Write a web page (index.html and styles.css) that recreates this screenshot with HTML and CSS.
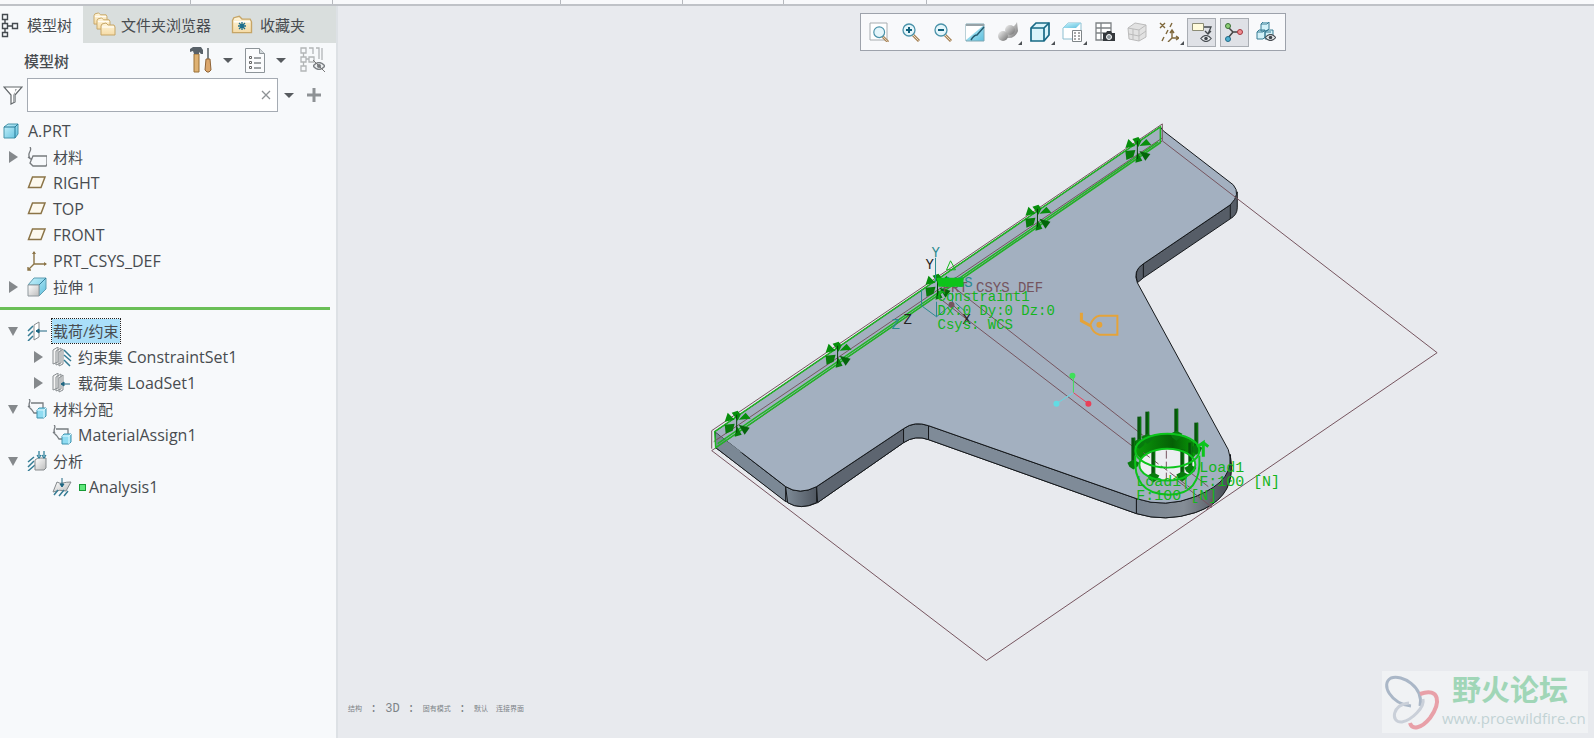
FILE: index.html
```html
<!DOCTYPE html>
<html lang="zh-CN">
<head>
  <meta charset="UTF-8">
  <title>A.PRT</title>
  <link rel="stylesheet" href="styles.css">
</head>
<body>
  <svg class="defs" aria-hidden="true">
    <defs>
      <linearGradient id="blue" x1="0" y1="0" x2="1" y2="1">
        <stop offset="0" stop-color="#c9f2fb"/><stop offset="1" stop-color="#5fc0de"/>
      </linearGradient>
      <linearGradient id="grey" x1="0" y1="0" x2="1" y2="1">
        <stop offset="0" stop-color="#ffffff"/><stop offset="1" stop-color="#bcbcbc"/>
      </linearGradient>
      <linearGradient id="ball" x1="0" y1="0" x2="1" y2="1">
        <stop offset="0" stop-color="#f4f4f4"/><stop offset="1" stop-color="#6f6f6f"/>
      </linearGradient>
      <linearGradient id="cream" x1="0" y1="0" x2="0" y2="1">
        <stop offset="0" stop-color="#fff6dc"/><stop offset="1" stop-color="#f5dba6"/>
      </linearGradient>
      <linearGradient id="wall" x1="0" y1="0" x2="1" y2="0">
        <stop offset="0" stop-color="#7e8b97"/><stop offset="1" stop-color="#505761"/>
      </linearGradient>
      <linearGradient id="tip" x1="0" y1="0" x2="1" y2="0">
        <stop offset="0" stop-color="#798592"/><stop offset="0.5" stop-color="#858d96"/><stop offset="1" stop-color="#444952"/>
      </linearGradient>
      <linearGradient id="bore" x1="0" y1="0" x2="1" y2="0">
        <stop offset="0" stop-color="#0a9a0a"/><stop offset="0.6" stop-color="#056005"/><stop offset="1" stop-color="#08a008"/>
      </linearGradient>
      <symbol id="plane" viewBox="0 0 20 20"><path d="M1.5 14.500 5.500 4H18l-4 10.500z" fill="#fdf9ee" stroke="#8b7447" stroke-width="1.500"/></symbol>
      <symbol id="folder" viewBox="0 0 16 14"><path d="M1 13V4l1-2 4-1 2 2h6l1 2v8z" fill="url(#cream)" stroke="#c6a566"/><path d="M2 5h12" stroke="#fff"/></symbol>
      <symbol id="assign" viewBox="0 0 20 20">
        <path d="M2 0c3 2-2 5 1 8M1 7l4 4M4 4h12v5M5 11l2 3h4" fill="none" stroke="#777c80" stroke-width="1.300"/>
        <path d="M10 11l2-2h7v8l-2 2h-7z" fill="#8fdcf2" stroke="#3c91ad"/><path d="M10 11h7l2-2M17 11v8" fill="none" stroke="#dff8ff"/>
      </symbol>
      <symbol id="loupe" viewBox="0 0 20 20">
        <path d="M12 13l6 6" stroke="#a98559" stroke-width="3"/><path d="M12 13l5.500 5.500" stroke="#e9dcc8" stroke-width="1"/>
        <circle cx="8" cy="8" r="6" fill="#e5f6fb" stroke="#4b93aa" stroke-width="1.300"/>
      </symbol>
      <symbol id="eye" viewBox="0 0 12 8"><path d="M0 4q6-7 12 0q-6 7-12 0z" fill="#e7eaec" stroke="#484d52" stroke-width="1.300"/><circle cx="6" cy="4" r="2" fill="#3f444a"/></symbol>
      <g id="pin">
        <path d="M-12-2l3-9 7 7zM-5-11l6-2 3 4-3 6zM2-4l7-7 5 6z" fill="#078f0c"/>
        <path d="M-12 1l10-1-2 7-7 3z" fill="#087c0b"/><path d="M2 1l11 3-5 7z" fill="#04650a"/><path d="M0 2l5 9-7 2z" fill="#067d0b"/>
        <path d="M0-9V9" stroke="#063f08"/>
      </g>
      <g id="force">
        <path d="M0-18V9" stroke="#07540b" stroke-width="4"/><path d="M1-18V9" stroke="#0a7d10"/>
        <path d="M-6 7-4 11 0 14 4 11 6 7 0 4z" fill="#087a0e"/>
      </g>
    </defs>
  </svg>

  <div class="ribbon"><i></i><i></i><i></i><i></i><i></i><i></i></div>

  <div class="window">
    <aside class="sidebar">
      <nav class="tabs">
        <button class="tab tab-model active">
          <svg width="20" height="26" viewBox="0 0 20 26"><path d="M2.500 2.500h5v5h-5zM2.500 11.500h5v5h-5zM2.500 20.500h5v4h-5zM12.500 11.500h5v5h-5zM5 8v3M5 17v3M8 14h4" fill="none" stroke="#444a4f" stroke-width="1.400"/></svg>
          模型树
        </button>
        <button class="tab tab-folders">
          <svg width="24" height="26" viewBox="0 0 24 26"><use href="#folder" width="15" height="13"/><use href="#folder" x="3" y="5" width="15" height="13"/><use href="#folder" x="7" y="10" width="16" height="14"/></svg>
          文件夹浏览器
        </button>
        <button class="tab tab-favorites">
          <svg width="22" height="20" viewBox="0 0 22 20"><use href="#folder" width="22" height="19"/><path d="M11 7v8M7 11h8M8 8l6 6M14 8l-6 6" stroke="#1e6f8d" stroke-width="1.300"/></svg>
          收藏夹
        </button>
      </nav>

      <div class="heading">
        <h1>模型树</h1>
        <button class="icon-button" aria-label="设置">
          <svg width="22" height="26" viewBox="0 0 22 26"><path d="M4 7h5v18H4z" fill="#dfb273" stroke="#9a7137"/><path d="M0 5V2l3-2h8l2 3v4h-2L9 5v2H4L3 4z" fill="#596269"/><path d="M17 1h2v11h-2z" fill="#7d8589"/><path d="M16 12h4l1 11-2 2h-2l-2-2z" fill="#dba76d" stroke="#8f6437"/></svg>
          <span class="caret"></span>
        </button>
        <button class="icon-button" aria-label="显示">
          <svg width="20" height="25" viewBox="0 0 20 25"><path d="M.5.500h14l5 5v19H.5z" fill="#fbfcfd" stroke="#8d9499"/><path d="M14.500.5v5h5" fill="#d3d8db" stroke="#8d9499"/><path d="M9 10h7M9 15h7M9 20h7" stroke="#43484c"/><path d="M4.500 8.500h2v2h-2zM4.500 13.500h2v2h-2zM4.500 18.500h2v2h-2z" fill="#fff" stroke="#666"/></svg>
          <span class="caret"></span>
        </button>
        <button class="icon-button last" aria-label="列">
          <svg width="26" height="26" viewBox="0 0 26 26"><path d="M1 1h5v5H1zM1 10h5v5H1zM1 19h5v5H1zM9 10h5v5H9zM3.500 6v4M3.500 15v4M6 12h3M9 1h4v6M16 1h3v11M22 1v12" fill="none" stroke="#b2b5b7" stroke-width="1.300"/><use href="#eye" x="13" y="15" width="12" height="8" opacity=".7"/><path d="M13 13l12 12" stroke="#777"/></svg>
        </button>
      </div>

      <div class="search">
        <svg width="20" height="20" viewBox="0 0 20 20"><path d="M1 2h18l-7 8v7l-4 2v-9z" fill="#fff" stroke="#63686b" stroke-width="1.200"/><path d="M12 4v13h-2v-7l4-6z" fill="#a8acae"/></svg>
        <div class="search-box">
          <input type="text" aria-label="搜索">
          <button aria-label="清除"><svg width="10" height="10" viewBox="0 0 10 10"><path d="M1 1l8 8M9 1 1 9" stroke="#8e9295" stroke-width="1.300"/></svg></button>
        </div>
        <button class="more" aria-label="历史"><span class="caret"></span></button>
        <button class="add" aria-label="添加"><svg width="14" height="14" viewBox="0 0 14 14"><path d="M7 0v14M0 7h14" stroke="#8e9295" stroke-width="3"/></svg></button>
      </div>

      <ul class="tree">
        <li class="row root"><svg viewBox="0 0 20 20"><path d="M4 6l4-3h10v10l-3 4H4z" fill="url(#blue)" stroke="#4794aa"/><path d="M4 6h11l3-3M15 6v11" fill="none" stroke="#277b98"/></svg><span class="name">A.PRT</span></li>
        <li class="row"><button class="twist closed" aria-label="展开"></button><svg viewBox="0 0 20 20"><path d="M3 0c3 4-4 6 0 11M1 10l4 3M6 9h14v8l-1 2H6l-3-3z" fill="none" stroke="#777b7e" stroke-width="1.300"/></svg>材料</li>
        <li class="row leaf"><svg><use href="#plane"/></svg><span class="name">RIGHT</span></li>
        <li class="row leaf"><svg><use href="#plane"/></svg><span class="name">TOP</span></li>
        <li class="row leaf"><svg><use href="#plane"/></svg><span class="name">FRONT</span></li>
        <li class="row leaf"><svg viewBox="0 0 20 20"><path d="M7 1v12h12M7 13l-6 6M1 16v3h3" fill="none" stroke="#8b7447" stroke-width="1.400"/><path d="M5 3l2-3 2 3zM17 11l3 2-3 2z" fill="#8b7447"/></svg><span class="name">PRT_CSYS_DEF</span></li>
        <li class="row"><button class="twist closed" aria-label="展开"></button><svg viewBox="0 0 20 20"><path d="M1 8l6-7h12v11l-7 7V8z" fill="url(#blue)" stroke="#5f9db1"/><path d="M1 8h11v11H1z" fill="url(#grey)" stroke="#8f989d"/><path d="M12 8l7-7" stroke="#317f9c"/></svg>拉伸 1</li>
      </ul>
      <hr class="insert-here">
      <ul class="tree">
        <li class="row"><button class="twist" aria-label="折叠"></button><svg viewBox="0 0 20 20"><path d="M1 10l5-5M1 15l5-5M1 20l5-5" stroke="#357c94" stroke-width="1.500"/><path d="M7 4l5-3v15l-5 3z" fill="#fff" stroke="#858a8d"/><path d="M9 10h11M9 10l3-2v4z" fill="#1e6682" stroke="#1e6682"/></svg><span class="selected">载荷/约束</span></li>
        <li class="row child"><button class="twist closed" aria-label="展开"></button><svg viewBox="0 0 20 20"><path d="M1 3l5-3v15l-5 2zM4 4l5-3v15l-5 2zM7 5l4-3v15l-4 2z" fill="#f4f4f4" stroke="#898e91"/><path d="M12 3l7 7M12 8l7 6M12 13l6 6" stroke="#357c94" stroke-width="1.500"/></svg>约束集&nbsp;<span class="name">ConstraintSet1</span></li>
        <li class="row child"><button class="twist closed" aria-label="展开"></button><svg viewBox="0 0 20 20"><path d="M1 3l5-3v15l-5 2zM4 4l5-3v15l-5 2zM7 5l4-3v15l-4 2z" fill="#f4f4f4" stroke="#898e91"/><path d="M9 11h9M9 11l3-2v4z" fill="#1e6682" stroke="#1e6682"/></svg>载荷集&nbsp;<span class="name">LoadSet1</span></li>
        <li class="row"><button class="twist" aria-label="折叠"></button><svg><use href="#assign"/></svg>材料分配</li>
        <li class="row child leaf"><svg><use href="#assign"/></svg><span class="name">MaterialAssign1</span></li>
        <li class="row"><button class="twist" aria-label="折叠"></button><svg viewBox="0 0 20 20"><path d="M1 11l6-5M1 16l6-6M1 20l7-6" stroke="#357c94" stroke-width="1.500"/><path d="M8 9l3-2h8v10l-2 2H8z" fill="url(#grey)" stroke="#85898c"/><path d="M12 0v5M17 0v5M10 4l2 3 2-3M15 4l2 3 2-3" fill="none" stroke="#247995" stroke-width="1.200"/></svg>分析</li>
        <li class="row child leaf"><svg viewBox="0 0 20 20"><path d="M5 5q3 2 6 1t8-1l-5 9q-6-2-13 1z" fill="url(#grey)" stroke="#83898c"/><path d="M2 18l4-5M7 19l5-6M12 19l4-5" stroke="#357c94" stroke-width="1.500"/><path d="M10 1v8M8 7l2 3 2-3z" fill="#1e6682" stroke="#1e6682"/></svg><span class="status"></span><span class="name">Analysis1</span></li>
      </ul>
    </aside>

    <main class="viewport">
      <svg class="scene" viewBox="337 6 1257 732">
        <!-- side walls -->
        <g stroke="#15181b">
          <path d="M715 433 785 487Q799 496 816 487L903 429Q914 421 928 426L1136 499Q1165 509 1195 497 1231 482 1230 455L1231 465Q1232 500 1195 513 1165 523 1136 514L928 440Q915 435 903 443L817 503Q800 511 787 503L715 448z" fill="url(#wall)"/>
          <path d="M1136 499Q1165 509 1195 497 1231 482 1230 455L1231 468Q1232 500 1195 513 1165 523 1136 514z" fill="url(#tip)"/>
          <path d="M715 433 785 487v15L715 448z" fill="#7b8895"/>
          <path d="M785 487Q799 496 816 487v16Q800 511 787 503z" fill="url(#wall)"/>
          <path d="M816 487 903 429v14L817 503z" fill="#5d6570"/>
          <path d="M903 429Q914 421 928 426v14Q915 435 903 443z" fill="#717d89"/>
          <path d="M928 426 1136 499v15L928 440z" fill="#7f8b98"/>
          <path d="M1137 283Q1133 268 1143 264L1230 205 1237 192v16Q1237 215 1230 219L1143 278z" fill="#565d67"/>
        </g>
        <!-- top face -->
        <path d="M715 433 785 487Q799 496 816 487L903 429Q914 421 928 426L1136 499Q1165 509 1195 497 1238 480 1228 450L1137 283Q1132 271 1143 264L1230 205Q1241 194 1233 185L1163 131 1160 127 714 432z" fill="#a3b0c0" stroke="#15181b"/>
        <path d="M715 433 742 453 715 448z" fill="#7b8895"/>
        <path d="M1143 264v14M1230 205v14" fill="none" stroke="#15181b"/>

        <!-- datum outlines -->
        <g fill="none" stroke="#75545e">
          <path d="M711 451 986 661 1437 353 1162 141z"/>
          <path d="M711 449v-18L1162 124v17M713 442 1162 138"/>
          <path d="M945 281 1208 487M937 297 1211 507M1206 510l6-5M1211 499v9"/>
        </g>

        <!-- constrained face -->
        <path d="M714 432 1160 127v16L715 448zM717 444 1158 142" fill="none" stroke="#1fb524" stroke-width="1.500"/>
        <use href="#pin" x="736" y="424"/><use href="#pin" x="837" y="355"/><use href="#pin" x="937" y="287"/><use href="#pin" x="1037" y="218"/><use href="#pin" x="1137" y="150"/>

        <!-- coordinate system -->
        <path d="M935 258v24M921 290v16l15 11 16-13v-11M936 302v15M955 303l10 9" fill="none" stroke="#2a8a90"/>
        <path d="M951 304 968 320" stroke="#75545e"/>
        <circle cx="951" cy="305" r="3" fill="#75545e"/>
        <g class="cad">
          <text x="942" y="292" class="datum">PRT_CSYS_DEF</text>
          <text x="947" y="287" class="teal">WCS</text>
          <text x="931" y="257" class="teal">Y</text>
          <text x="891" y="329" class="teal">Z</text>
          <text x="925" y="269" class="black">Y</text>
          <text x="903" y="324" class="black">Z</text>
          <text x="962" y="324" class="black">X</text>
          <text x="937" y="301">Constraint1</text>
          <text x="937" y="315">Dx:0 Dy:0 Dz:0</text>
          <text x="937" y="329">Csys: WCS</text>
        </g>
        <path d="M936 278 963 278v9h-25z" fill="#0dc31a"/>
        <path d="M946 270l4-9 5 9z" fill="none" stroke="#16b71b"/>

        <!-- material tag -->
        <path d="M1081 313v8l9 5" fill="none" stroke="#e5a339" stroke-width="3"/>
        <path d="M1090 325q3-8 9-9h18v19h-18q-7-2-9-10z" fill="none" stroke="#e5a339" stroke-width="2"/>
        <circle cx="1099" cy="325" r="3" fill="#e5a339"/>

        <!-- spin centre -->
        <path d="M1073 393v-16" stroke="#3fe05a"/><circle cx="1072" cy="376" r="3" fill="#3fe05a"/>
        <path d="M1073 393l-17 11" stroke="#62dbe3"/><circle cx="1056" cy="404" r="3" fill="#62dbe3"/>
        <path d="M1073 393l15 11" stroke="#e94058"/><circle cx="1088" cy="404" r="3" fill="#e94058"/>

        <!-- loaded hole -->
        <ellipse cx="1166" cy="450" rx="31" ry="16" fill="url(#bore)"/>
        <ellipse cx="1167" cy="465" rx="28" ry="16" fill="#eceef1"/>
        <path d="M1143 453l48 36M1166 451v30" fill="none" stroke="#75545e" stroke-dasharray="8 3"/>
        <use href="#force" x="1139" y="435"/><use href="#force" x="1147" y="430"/><use href="#force" x="1176" y="427"/><use href="#force" x="1196" y="441"/>
        <use href="#force" x="1133" y="456"/><use href="#force" x="1153" y="469"/><use href="#force" x="1190" y="461"/><use href="#force" x="1182" y="468"/>
        <g fill="none" stroke="#0cc51b" stroke-width="2">
          <ellipse cx="1167" cy="451" rx="32" ry="17"/>
          <path d="M1135 456Q1132 494 1167 495T1199 456"/>
          <ellipse cx="1167" cy="465" rx="28" ry="16"/>
          <path d="M1203 457v-14l-6 4M1203 443l5 4" stroke-width="3"/>
        </g>
        <g class="cad load">
          <text x="1199" y="472">Load1</text>
          <text x="1136" y="486">Load1| F:100 [N]</text>
          <text x="1136" y="500">F:100 [N]</text>
        </g>
      </svg>

      <div class="toolbar">
        <button aria-label="重新调整"><svg viewBox="0 0 20 20"><path d="M1 1h17v17H1z" fill="#fff" stroke="#a8adb0"/><use href="#loupe" x="3" y="3" width="18" height="18"/></svg></button>
        <button aria-label="放大"><svg><use href="#loupe"/><path d="M8 5v6M5 8h6" stroke="#12617c" stroke-width="2"/></svg></button>
        <button aria-label="缩小"><svg><use href="#loupe"/><path d="M5 8h6" stroke="#12617c" stroke-width="2"/></svg></button>
        <button aria-label="重画"><svg viewBox="0 0 20 20"><path d="M1 2h18v17H1z" fill="url(#blue)" stroke="#7fa7b3"/><path d="M1 3h18L1 18z" fill="#fff"/><path d="M1 3h18" stroke="#96a2a7" stroke-width="2"/><path d="M6 18q3-5 6-5L19 5" fill="none" stroke="#235b70" stroke-width="1.500"/></svg></button>
        <button class="has-menu" aria-label="渲染"><svg viewBox="0 0 20 20"><path d="M9 5q7 2 10-5l1 9q-3 8-11 7z" fill="url(#ball)"/><circle cx="12" cy="8" r="5" fill="url(#ball)"/><circle cx="5" cy="14" r="5" fill="url(#ball)"/></svg></button>
        <button class="has-menu" aria-label="显示样式"><svg viewBox="0 0 20 20"><path d="M1 6l5-5h13v12l-5 6H1z" fill="#d9f4fb" stroke="#176985" stroke-width="1.700"/><path d="M1 6h13v13M14 6l5-5" fill="none" stroke="#176985" stroke-width="1.700"/></svg></button>
        <button class="has-menu" aria-label="已保存方向"><svg viewBox="0 0 20 20"><path d="M1 6l5-5h13v12l-5 4H1z" fill="#fff" stroke="#8dbfd0"/><path d="M1 6l5-5h13l-5 5z" fill="url(#blue)"/><path d="M10.500 8.500h9v11h-9z" fill="#fff" stroke="#7f8588"/><path d="M12 11h2M16 11h2M12 14h2M16 14h2M12 17h2M16 17h2" stroke="#555"/></svg></button>
        <button aria-label="视图管理器"><svg viewBox="0 0 20 20"><path d="M1 1h15v17H1zM1 6h15M1 11h15M6 1v17" fill="#fff" stroke="#7d8285" stroke-width="1.300"/><path d="M8 11h3l1-2h4l1 2h3v8H8z" fill="#34383c"/><circle cx="14" cy="15" r="2.500" fill="#929ba0" stroke="#fff"/></svg></button>
        <button aria-label="透视图"><svg viewBox="0 0 20 20"><path d="M1 6l7-5 11 2v12l-7 4-10-2z" fill="#e2e2e2" stroke="#bbb"/><path d="M1 6l11 2v11M12 8l7-5M6 7v11M2 12l10 2 7-5" fill="none" stroke="#bbb"/></svg></button>
        <button class="has-menu" aria-label="基准显示"><svg viewBox="0 0 20 20"><path d="M1 1l5 5M6 1 1 6M13 1l-2 4M9 8l-2 4M5 15l-2 4M13 9v7h7M13 16l-4 4M11 11l2-3 2 3M17 14l3 2-3 2" fill="none" stroke="#7e673b" stroke-width="1.400"/></svg></button>
        <button class="pressed" aria-label="注释显示"><svg viewBox="0 0 20 20"><path d="M.5 1.500h11v7H.5z" fill="#fffbdc" stroke="#8d8d76"/><path d="M12 5h7l-3 7M13 9l3 3 3-3" fill="none" stroke="#44494d" stroke-width="1.300"/><use href="#eye" x="8" y="13" width="12" height="7"/></svg></button>
        <button class="pressed" aria-label="旋转中心"><svg viewBox="0 0 20 20"><path d="M4 5l5 5h7M9 10l-5 6" fill="none" stroke="#444" stroke-width="1.500"/><circle cx="4" cy="4" r="2.500" fill="#8dce76" stroke="#3b7137"/><circle cx="16" cy="10" r="2.500" fill="#ef8c91" stroke="#a5373e"/><circle cx="4" cy="17" r="2.500" fill="#4fb0d1" stroke="#256b87"/></svg></button>
        <button aria-label="仿真显示"><svg viewBox="0 0 20 20"><path d="M5 2l2-2h6v7l-2 2H5zM1 10l2-2h6v7l-2 2H1zM9 10l2-2h6v7l-2 2H9z" fill="#d3f1f8" stroke="#397d94"/><path d="M5 2h6l2-2M1 10h6l2-2M9 10h6" fill="none" stroke="#397d94"/><use href="#eye" x="9" y="12" width="11" height="7"/></svg></button>
      </div>

      <div class="status-line"><span>结构</span><b>:</b><em>3D</em><b>:</b><span>固有模式</span><b>:</b><span>默认</span><span>连接界面</span></div>

      <a class="watermark" href="#">
        <svg viewBox="0 0 60 60"><g fill="none"><path d="M38 34C42 15 20 2 9 6-2 12 9 32 29 34" stroke="#aab7c7" stroke-width="3"/><path d="M38 22c20-7 21 9 10 24-9 11-18 12-20 5" stroke="#e8a0a8" stroke-width="4"/><path d="M27 31c-17 1-19 20-7 19 10-2 23-15 21-23" stroke="#cad0d9" stroke-width="3"/></g></svg>
        <span class="brand"><strong>野火论坛</strong><small>www.proewildfire.cn</small></span>
      </a>
    </main>
  </div>
</body>
</html>
```
FILE: styles.css
```css
* {
  box-sizing: border-box;
}

body {
  margin: 0;
  min-height: 100vh;
  display: flex;
  flex-direction: column;
  font-family: "Open Sans", "Noto Sans CJK SC", sans-serif;
  font-size: 15px;
  color: #484c50;
  background: #e8eaee;
}

button {
  padding: 0;
  border: 0;
  background: none;
  font: inherit;
  color: inherit;
  cursor: pointer;
}

svg {
  display: block;
  flex: none;
}

.defs {
  position: absolute;
  width: 0;
  height: 0;
}

.ribbon {
  display: grid;
  grid-template-columns: 191px 142px 228px 122px 101px 143px;
  height: 6px;
  background: #f8f9fb;
  border-bottom: 2px solid #bfc2c7;
}

.ribbon i {
  border-right: 1px solid #b5b8bd;
}

.window {
  flex: 1;
  display: flex;
}

/* sidebar */
.sidebar {
  flex: none;
  width: 338px;
  background: #f7f9fb;
  border-right: 2px solid #dde1e5;
}

.tabs {
  display: flex;
  height: 37px;
  background: #d9dedd;
}

.tab {
  display: flex;
  align-items: center;
  gap: 7px;
}

.tab-model {
  width: 83px;
  background: #f7f9fb;
}

.tab-folders {
  gap: 4px;
  padding-left: 10px;
}

.tab-favorites {
  padding-left: 20px;
}

.heading {
  display: flex;
  align-items: center;
  height: 34px;
  padding-left: 24px;
}

.heading h1 {
  flex: 1;
  margin: 0;
  font-size: 15px;
  font-weight: 500;
}

.icon-button {
  display: flex;
  align-items: center;
  gap: 11px;
  margin-right: 12px;
}

.icon-button.last {
  margin: 0 10px 0 2px;
}

.caret {
  border: 5px solid transparent;
  border-top-color: #575b5f;
  border-bottom: 0;
}

.search {
  display: flex;
  align-items: center;
  height: 34px;
  margin-top: 1px;
  padding-left: 3px;
}

.search-box {
  display: flex;
  width: 251px;
  height: 34px;
  margin-left: 4px;
  border: 1px solid #a5abb3;
  background: #fff;
}

.search-box input {
  flex: 1;
  min-width: 0;
  border: 0;
  outline: 0;
  font: inherit;
}

.search-box button {
  padding: 0 6px;
}

.more {
  margin: 0 13px 0 6px;
}

.more .caret {
  display: block;
}

.tree {
  margin: 0;
  padding: 0;
  list-style: none;
}

.search + .tree {
  padding-top: 6px;
}

.row {
  display: flex;
  align-items: center;
  height: 26px;
  padding-left: 8px;
  line-height: 22px;
  white-space: nowrap;
}

.row svg {
  width: 20px;
  height: 20px;
  margin-right: 6px;
}

.row .name {
  font-size: 16px;
}

.row.root {
  padding-left: 0;
}

.row.root svg {
  margin-right: 8px;
}

.row.leaf {
  padding-left: 27px;
}

.row.child {
  padding-left: 33px;
}

.row.child.leaf {
  padding-left: 52px;
}

.twist {
  width: 19px;
  height: 12px;
}

.twist::before {
  content: "";
  display: block;
  width: 0;
  border: 5px solid transparent;
  border-top: 9px solid #85898c;
  border-bottom: 0;
}

.twist.closed::before {
  margin-left: 1px;
  border: 6px solid transparent;
  border-left: 9px solid #85898c;
  border-right: 0;
}

.insert-here {
  height: 3px;
  margin: 7px 6px 8px 0;
  border: 0;
  background: #6abf57;
}

.selected {
  margin-left: -1px;
  outline: 1px dotted #222;
  line-height: 24px;
  padding: 0 1px;
  background: #aadff9;
}

.status {
  width: 7px;
  height: 7px;
  margin: 0 3px 0 1px;
  border: 1px solid #159b35;
  background: #5ee77b;
}

/* graphics area */
.viewport {
  flex: 1;
  min-width: 0;
  position: relative;
}

.scene {
  width: 100%;
  height: auto;
}

.cad {
  font-family: "Liberation Mono", monospace;
  font-size: 14px;
  fill: #14b51c;
}

.cad.load {
  font-size: 15px;
}

.cad .datum {
  fill: #75545e;
}

.cad .teal {
  fill: #2a8a90;
}

.cad .black {
  fill: #222;
}

.toolbar {
  position: absolute;
  top: 7px;
  right: 308px;
  display: flex;
  align-items: center;
  justify-content: space-between;
  width: 426px;
  height: 38px;
  padding: 0 4px 0 3px;
  border: 1px solid #9da2ab;
  background: #f8f9fb;
}

.toolbar button {
  position: relative;
  display: flex;
  align-items: center;
  justify-content: center;
  width: 29px;
  height: 29px;
}

.toolbar svg {
  width: 20px;
  height: 20px;
}

.toolbar .pressed {
  border: 1px solid #a9adb3;
  background: #dfe1e6;
}

.has-menu::after {
  content: "";
  position: absolute;
  right: 0;
  bottom: 2px;
  border: 2px solid #4c5054;
  border-top-color: transparent;
  border-left-color: transparent;
}

.status-line {
  position: absolute;
  left: 10px;
  bottom: 21px;
  display: flex;
  align-items: center;
  gap: 8px;
  font-size: 7px;
  line-height: 16px;
  color: #7d8387;
}

.status-line b,
.status-line em {
  font: 12px/16px "Liberation Mono", monospace;
}

.watermark {
  position: absolute;
  right: 6px;
  bottom: 5px;
  display: flex;
  align-items: center;
  width: 206px;
  height: 62px;
  background: #f0f2f4;
  text-decoration: none;
}

.watermark svg {
  width: 60px;
  height: 60px;
}

.brand {
  display: flex;
  flex-direction: column;
  line-height: 24px;
  color: #c2d3d4;
}

.brand strong {
  padding-left: 10px;
  font-size: 29px;
  line-height: 32px;
  color: #a0d6b7;
}

.brand small {
  font-size: 15px;
}
```
